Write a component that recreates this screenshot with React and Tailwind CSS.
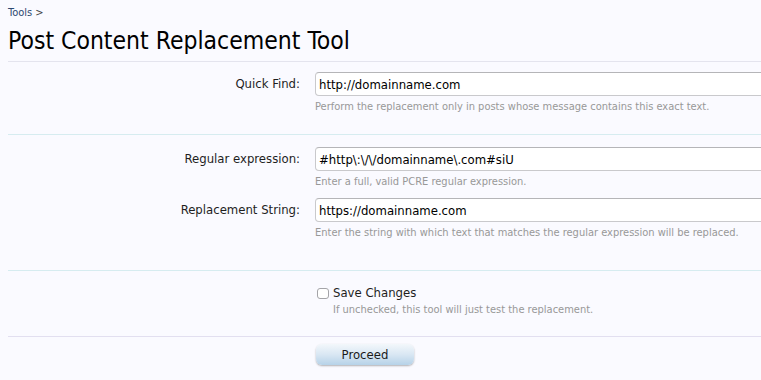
const font = { fontFamily: '"DejaVu Sans Condensed", "DejaVu Sans", sans-serif' }

function Field({ label, value, hint, className = '' }) {
  return (
    <div className={className}>
      <div className="flex">
        <label className="w-[292px] shrink-0 text-right text-[13px] leading-[24px] text-[#1e1e1e]">{label}</label>
        <input
          readOnly
          value={value}
          className="ml-[15px] h-[24px] flex-1 rounded-[4px] border border-[#c9c9cc] border-t-[#b5b5b8] bg-white pl-[3px] text-[13px] text-black outline-none"
          style={font}
        />
      </div>
      <p className="ml-[307px] mt-[3px] text-[11px] leading-[16px] text-[#989898]">{hint}</p>
    </div>
  )
}

export default function App() {
  return (
    <div className="h-[380px] w-[761px] overflow-hidden bg-[#fafaff]" style={font}>
      <div className="w-[840px] pl-2">
        <div className="pt-[6px] text-[11px] leading-[14px]">
          <span className="text-[#2c4870]">Tools</span> <span className="text-[#444]">&gt;</span>
        </div>
        <h1 className="mt-[6px] text-[24.5px] leading-[30px] text-black">Post Content Replacement Tool</h1>
        <div className="mt-[5px] h-px bg-[#e4e4ee]" />

        <div className="pb-[19px] pt-[10px]">
          <Field
            label="Quick Find:"
            value="http://domainname.com"
            hint="Perform the replacement only in posts whose message contains this exact text."
          />
        </div>
        <div className="h-px bg-[#d6ecf0]" />

        <div className="pb-[29px] pt-[12px]">
          <Field
            label="Regular expression:"
            value="#http\:\/\/domainname\.com#siU"
            hint="Enter a full, valid PCRE regular expression."
          />
          <Field
            className="mt-[8px]"
            label="Replacement String:"
            value="https://domainname.com"
            hint="Enter the string with which text that matches the regular expression will be replaced."
          />
        </div>
        <div className="h-px bg-[#d6ecf0]" />

        <div className="pb-[18px] pl-[307px] pt-[14px]">
          <label className="flex items-center text-[13px] leading-[16px] text-[#1e1e1e]">
            <span className="ml-[2px] mr-[4px] h-[11px] w-[12px] rounded-[3px] border border-[#a4a4a8] bg-white" />
            Save Changes
          </label>
          <p className="ml-[18px] mt-[1px] text-[11px] leading-[16px] text-[#989898]">
            If unchecked, this tool will just test the replacement.
          </p>
        </div>
        <div className="h-px bg-[#e2dff0]" />

        <div className="pl-[308px] pt-[5px]">
          <button
            type="button"
            className="h-[21px] w-[98px] rounded-[6px] bg-gradient-to-b from-[#f3f7fb] via-[#d9e7f3] to-[#b6d2e8] text-[13px] leading-[21px] text-[#1a1a1a] shadow-[0_1px_2px_rgba(0,0,0,0.3)]"
            style={font}
          >
            Proceed
          </button>
        </div>
      </div>
    </div>
  )
}
